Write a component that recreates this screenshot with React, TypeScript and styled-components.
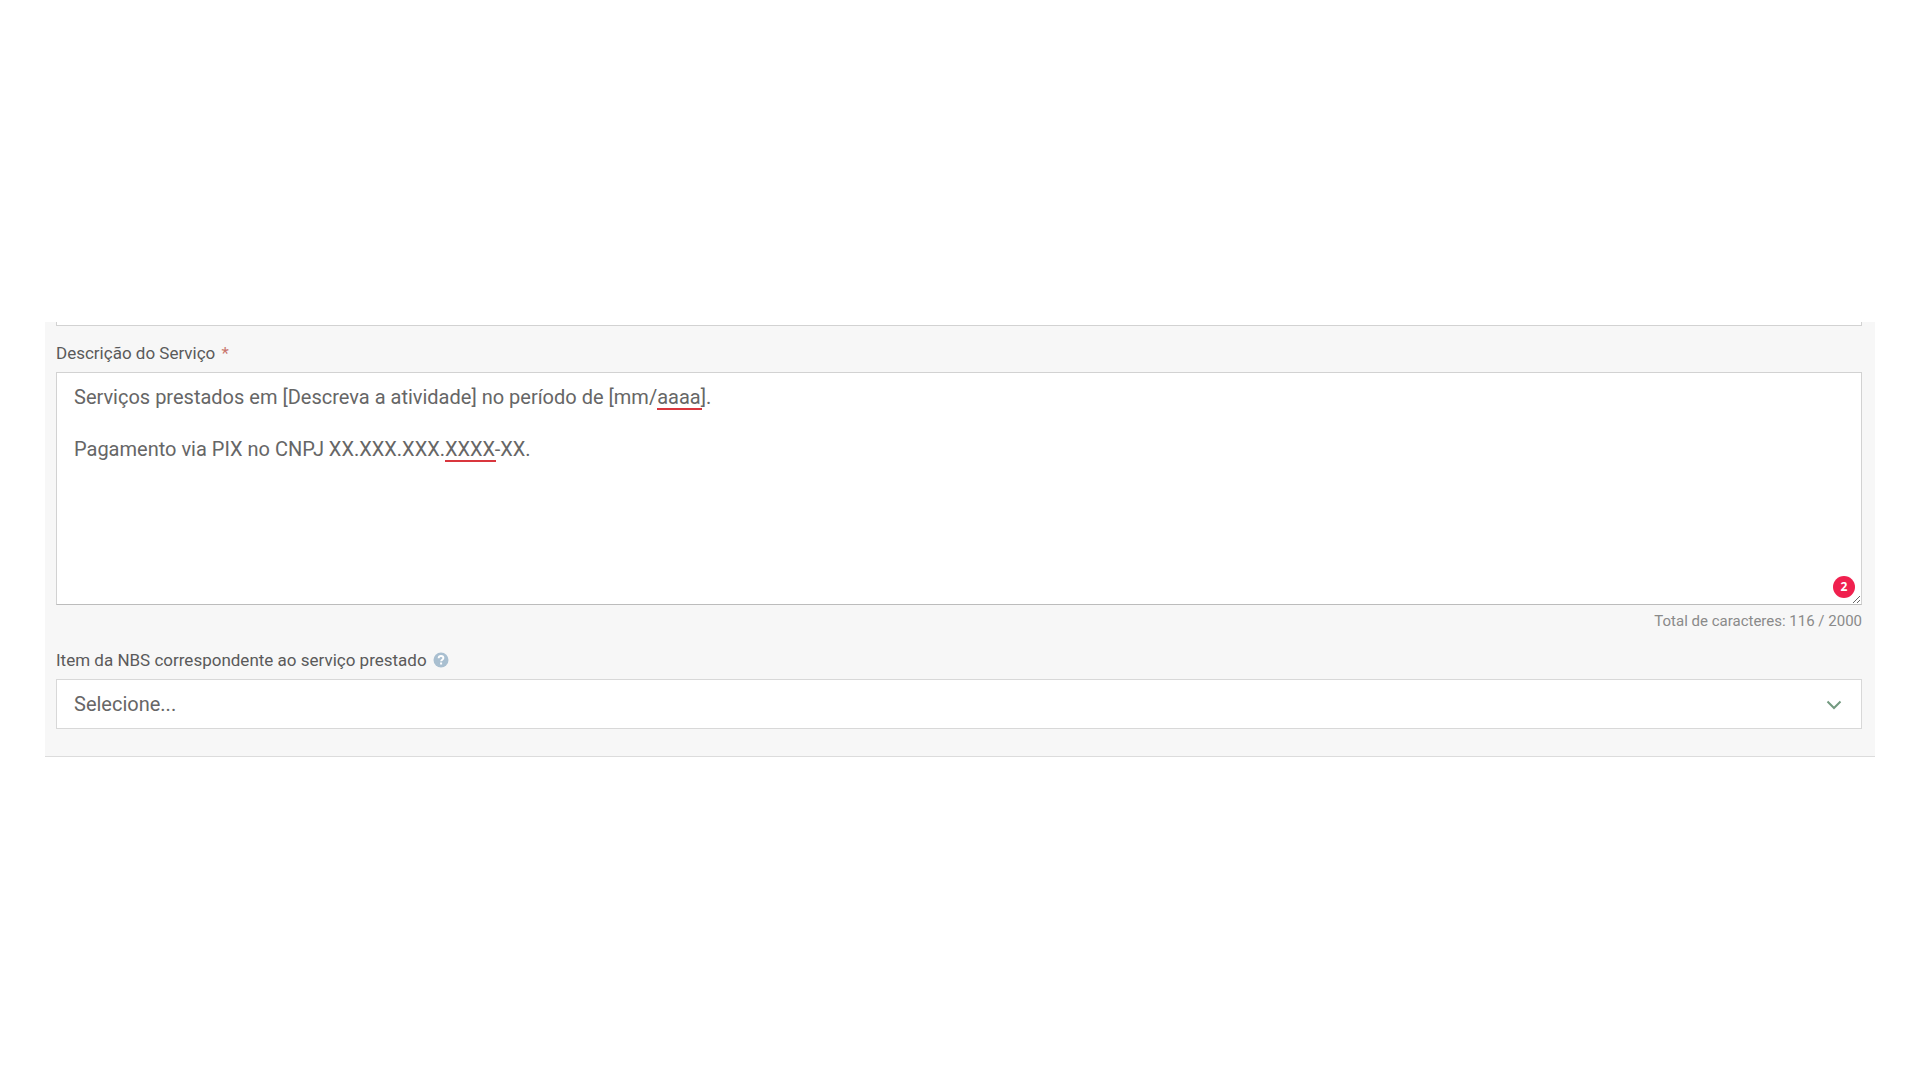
import { useState } from "react";
import styled, { createGlobalStyle } from "styled-components";

const GlobalStyle = createGlobalStyle`
  *, *::before, *::after { box-sizing: border-box; }
  body {
    margin: 0;
    background: #ffffff;
    color: #5a5a5a;
    font-family: Roboto, "Liberation Sans", sans-serif;
  }
`;

const Page = styled.main`
  min-height: 100vh;
  padding: 0 45px 1px;
  display: flex;
  flex-direction: column;
  justify-content: center;
`;

const Panel = styled.form`
  display: flex;
  flex-direction: column;
  padding: 0 13px 27px 11px;
  background: #f7f7f7;
  border-bottom: 1px solid #dcdcdc;
`;

const PreviousFieldEdge = styled.div`
  height: 4px;
  margin-bottom: 16px;
  background: #ffffff;
  border: 1px solid #d2d2d2;
  border-top: 0;
`;

const Field = styled.div`
  display: flex;
  flex-direction: column;
`;

const LabelRow = styled.div`
  display: flex;
  align-items: center;
  gap: 6px;
  height: 22px;
  margin-bottom: 8px;
`;

const Label = styled.label`
  font-size: 17px;
  line-height: 22px;
`;

const Required = styled.span`
  margin-left: 2px;
  color: #c9766d;
`;

const ControlWrap = styled.div`
  position: relative;
  display: flex;
`;

const TextArea = styled.textarea`
  flex: 1;
  height: 233px;
  padding: 11px 17px;
  border: 1px solid #d2d2d2;
  border-bottom-color: #bcbcbc;
  border-radius: 0;
  outline: 0;
  resize: vertical;
  background: #ffffff;
  color: #666666;
  font-family: inherit;
  font-size: 20px;
  line-height: 26px;
`;

const SpellMark = styled.span<{ $left: number; $top: number; $width: number }>`
  position: absolute;
  left: ${(p) => p.$left}px;
  top: ${(p) => p.$top}px;
  width: ${(p) => p.$width}px;
  height: 2px;
  background: #d9363e;
  pointer-events: none;
`;

const ErrorBadge = styled.button`
  position: absolute;
  right: 7px;
  bottom: 7px;
  width: 22px;
  height: 22px;
  padding: 0;
  border: 0;
  border-radius: 50%;
  background: #f0204e;
  color: #ffffff;
  font-family: "Open Sans", sans-serif;
  font-size: 12px;
  font-weight: 700;
  line-height: 22px;
  text-align: center;
`;

const Counter = styled.p`
  margin: 5px 0 17px;
  color: #8a8a8a;
  font-size: 15px;
  line-height: 22px;
  text-align: right;
`;

const HelpButton = styled.button`
  display: flex;
  padding: 0;
  border: 0;
  background: none;
`;

const Select = styled.select`
  flex: 1;
  height: 50px;
  padding: 0 17px;
  border: 1px solid #d8d8d8;
  border-radius: 0;
  outline: 0;
  appearance: none;
  background: #ffffff;
  color: #666666;
  font-family: inherit;
  font-size: 20px;
`;

const Chevron = styled.svg`
  position: absolute;
  right: 20px;
  top: 21px;
  pointer-events: none;
`;

const initialText =
  "Serviços prestados em [Descreva a atividade] no período de [mm/aaaa].\n\nPagamento via PIX no CNPJ XX.XXX.XXX.XXXX-XX.";

export default function App() {
  const [text, setText] = useState(initialText);

  return (
    <>
      <GlobalStyle />
      <Page>
        <Panel>
          <PreviousFieldEdge />
          <Field>
            <LabelRow>
              <Label htmlFor="descricao">
                Descrição do Serviço <Required>*</Required>
              </Label>
            </LabelRow>
            <ControlWrap>
              <TextArea
                id="descricao"
                spellCheck={false}
                maxLength={2000}
                required
                value={text}
                onChange={(e) => setText(e.target.value)}
              />
              <SpellMark $left={601} $top={36} $width={45} />
              <SpellMark $left={389} $top={88} $width={51} />
              <ErrorBadge type="button">2</ErrorBadge>
            </ControlWrap>
            <Counter>Total de caracteres: 116 / 2000</Counter>
          </Field>
          <Field>
            <LabelRow>
              <Label htmlFor="nbs">Item da NBS correspondente ao serviço prestado</Label>
              <HelpButton type="button" aria-label="Ajuda">
                <svg width="16" height="16" viewBox="0 0 16 16" fill="none" aria-hidden="true">
                  <circle cx="8" cy="8" r="7.5" fill="#a9bfd0" />
                  <path
                    d="M5.6 6.2C5.7 4.8 6.7 4 8 4c1.4 0 2.4.8 2.4 2 0 1.7-2.3 1.7-2.3 3.3"
                    stroke="#ffffff"
                    strokeWidth="1.9"
                  />
                  <rect x="7.1" y="10.5" width="2" height="2" fill="#ffffff" />
                </svg>
              </HelpButton>
            </LabelRow>
            <ControlWrap>
              <Select id="nbs" defaultValue="">
                <option value="">Selecione...</option>
              </Select>
              <Chevron width="16" height="10" viewBox="0 0 16 10" fill="none" aria-hidden="true">
                <path d="M1.5 1.5L8 8l6.5-6.5" stroke="#739a80" strokeWidth="2" />
              </Chevron>
            </ControlWrap>
          </Field>
        </Panel>
      </Page>
    </>
  );
}
